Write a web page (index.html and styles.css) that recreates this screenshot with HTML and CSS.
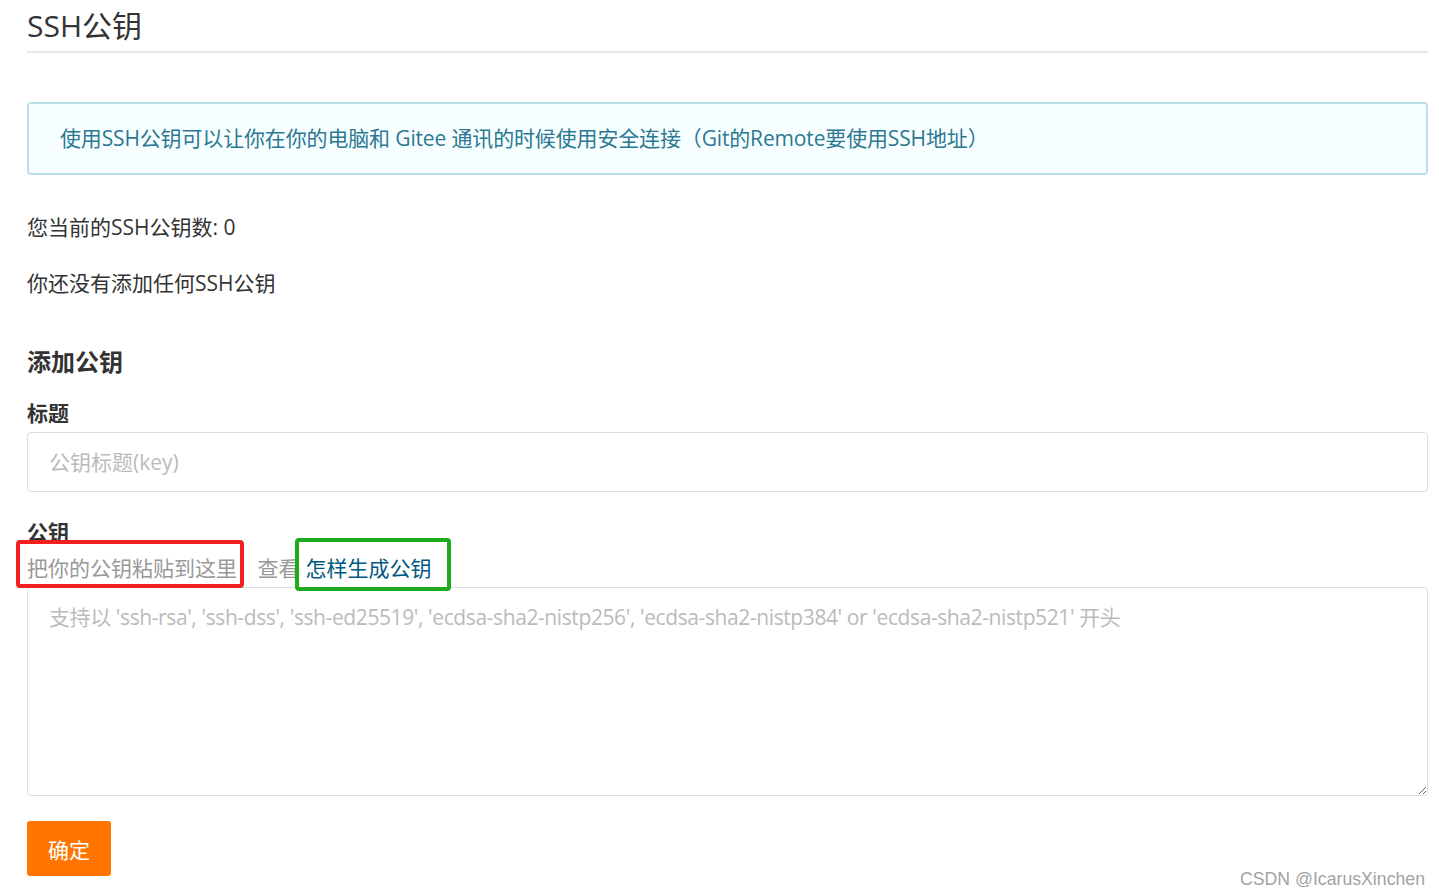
FILE: index.html
```html
<!DOCTYPE html>
<html lang="zh-CN">
<head>
    <meta charset="UTF-8">
    <meta name="viewport" content="width=device-width, initial-scale=1.0">
    <title>SSH公钥</title>
    <link rel="stylesheet" href="styles.css">
</head>
<body>
    <div class="page">
        <h1 class="page-title">SSH公钥</h1>

        <div class="info-box">
            使用SSH公钥可以让你在你的电脑和 Gitee 通讯的时候使用安全连接（Git的Remote要使用SSH地址）
        </div>

        <p class="key-count">您当前的SSH公钥数: 0</p>
        <p class="key-empty">你还没有添加任何SSH公钥</p>

        <!-- Add key form -->
        <h3 class="form-title">添加公钥</h3>
        <div class="field">
            <label for="key-title">标题</label>
            <input type="text" id="key-title" placeholder="公钥标题(key)">
        </div>
        <div class="field field-key">
            <label for="key-content">公钥</label>
            <div class="hint">
                <span class="mark mark-red">把你的公钥粘贴到这里</span>
                <span class="hint-see">查看</span><span class="mark mark-green"><a href="#">怎样生成公钥</a></span>
            </div>
            <textarea id="key-content" placeholder="支持以 'ssh-rsa', 'ssh-dss', 'ssh-ed25519', 'ecdsa-sha2-nistp256', 'ecdsa-sha2-nistp384' or 'ecdsa-sha2-nistp521' 开头"></textarea>
        </div>
        <button class="submit-btn">确定</button>
    </div>
    <div class="watermark">CSDN @IcarusXinchen</div>
</body>
</html>
```

FILE: styles.css
```css
* {
    margin: 0;
    padding: 0;
    box-sizing: border-box;
}
body {
    font-family: "Open Sans", "Noto Sans CJK SC", sans-serif;
    font-size: 21px;
    color: #333;
    background: #fff;
    height: 895px;
    overflow: hidden;
    position: relative;
}
.page {
    padding: 0 11px 0 27px;
}
.page-title {
    font-size: 30px;
    font-weight: normal;
    line-height: 40px;
    margin-top: 6px;
    padding-bottom: 5px;
    border-bottom: 2px solid #e8e8e8;
}
.info-box {
    margin-top: 49px;
    padding: 19px 31px;
    line-height: 31px;
    background: #f6feff;
    border: 2px solid #b9e1ea;
    border-radius: 4px;
    color: #2c7892;
    letter-spacing: -0.15px;
}
.key-count, .key-empty {
    line-height: 30px;
}
.key-count {
    margin-top: 37px;
}
.key-empty {
    margin-top: 26px;
}
.form-title {
    font-size: 24px;
    line-height: 34px;
    margin-top: 47px;
    font-weight: bold;
}
.field label {
    display: block;
    font-weight: bold;
    line-height: 28px;
}
.field {
    margin-top: 20px;
}
.field-key {
    margin-top: 26px;
}
.field input, .field textarea {
    display: block;
    width: 100%;
    margin-top: 5px;
    border: 1px solid #dcdde3;
    border-radius: 4px;
    font-family: inherit;
    font-size: 21px;
    color: #333;
    outline: none;
    padding: 0 21px;
}
.field input {
    height: 60px;
}
.field textarea {
    height: 209px;
    padding-top: 15px;
    line-height: 28px;
    letter-spacing: -0.4px;
    resize: vertical;
}
.field input::placeholder, .field textarea::placeholder {
    color: #bbb;
}
.hint {
    margin-top: 8px;
    line-height: 28px;
    color: #999;
}
.hint-see {
    margin-left: 15px;
}
.hint a {
    color: #005980;
    text-decoration: none;
}
.mark {
    position: relative;
}
.mark::after {
    content: "";
    position: absolute;
    border-radius: 4px;
    pointer-events: none;
}
.mark-red::after {
    top: -14px;
    bottom: -6px;
    left: -11px;
    right: -7px;
    border: 4px solid #f21f1f;
}
.mark-green {
    margin-left: 6px;
}
.mark-green::after {
    top: -16px;
    bottom: -9px;
    left: -10px;
    right: -20px;
    border: 4px solid #1daa1d;
}
.submit-btn {
    display: block;
    margin-top: 25px;
    height: 55px;
    padding: 0 21px;
    background: #ff7500;
    color: #fff;
    border: none;
    border-radius: 3px;
    font-family: inherit;
    font-size: 21px;
    cursor: pointer;
}
.watermark {
    position: absolute;
    right: 14px;
    bottom: 5px;
    font-family: "Liberation Sans", Arial, sans-serif;
    font-size: 17.7px;
    color: #a3a3a3;
}
```
